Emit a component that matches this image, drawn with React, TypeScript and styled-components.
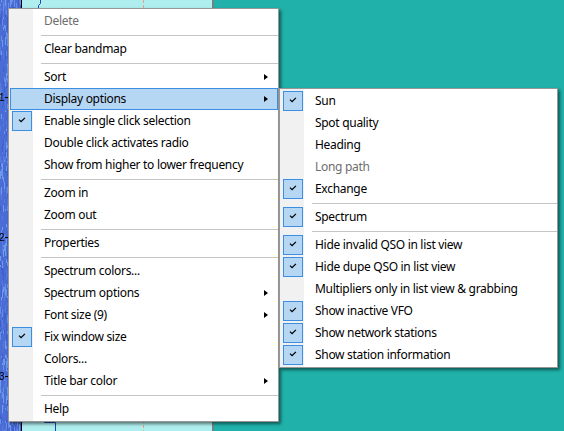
import React from 'react';
import styled, { createGlobalStyle, css } from 'styled-components';

const GlobalStyle = createGlobalStyle`
  html, body {
    margin: 0;
    padding: 0;
  }
  body {
    width: 564px;
    height: 431px;
    overflow: hidden;
    background: #20b2aa;
    font-family: "Noto Sans", "Liberation Sans", sans-serif;
  }
`;

const Desktop = styled.div`
  position: relative;
  width: 564px;
  height: 431px;
  display: flex;
  background: #20b2aa;
  overflow: hidden;
`;

const BandmapWindow = styled.div`
  width: 212px;
  height: 100%;
  display: flex;
  background: #afeeee;
  border-right: 2px solid #6f8585;
`;

const BandmapCanvas = styled.svg`
  display: block;
  width: 212px;
  height: 431px;
`;

const Menu = styled.div<{ $left: number; $top: number; $width: number }>`
  position: absolute;
  left: ${(p) => p.$left}px;
  top: ${(p) => p.$top}px;
  width: ${(p) => p.$width}px;
  box-sizing: border-box;
  display: flex;
  flex-direction: column;
  padding: 1px 0 1px 1px;
  border: 1px solid #979797;
  background: linear-gradient(to right, #f1f1f1 0, #f1f1f1 24px, #ffffff 24px);
  box-shadow: 2px 2px 3px rgba(0, 0, 0, 0.5);
  font-size: 12px;
  letter-spacing: -0.3px;
  color: #000;
`;

const Item = styled.div<{ $active?: boolean; $disabled?: boolean }>`
  height: 22px;
  box-sizing: border-box;
  display: flex;
  align-items: center;
  border: 1px solid transparent;
  color: ${(p) => (p.$disabled ? '#6d6d6d' : '#000')};
  white-space: nowrap;
  ${(p) =>
    p.$active &&
    css`
      background: #b6d7f4;
      border-color: #3b8ee0;
    `}
`;

const Gutter = styled.div`
  width: 33px;
  height: 20px;
  flex: none;
  display: flex;
  align-items: center;
`;

const CheckBox = styled.div`
  width: 20px;
  height: 20px;
  margin-left: 1px;
  box-sizing: border-box;
  background: #b6d7f4;
  border: 1px solid #3b8ee0;
  display: flex;
  align-items: center;
  justify-content: center;
`;

const Label = styled.span`
  flex: 1;
  line-height: 20px;
`;

const Arrow = styled.span`
  width: 0;
  height: 0;
  margin-right: 9px;
  border-left: 4px solid #000;
  border-top: 3.5px solid transparent;
  border-bottom: 3.5px solid transparent;
`;

const Separator = styled.div`
  height: 1px;
  margin: 3px 0 2px 31px;
  background: #c4c4c4;
`;

type Entry =
  | { sep: true }
  | { label: string; checked?: boolean; disabled?: boolean; sub?: boolean; active?: boolean };

const mainItems: Entry[] = [
  { label: 'Delete', disabled: true },
  { sep: true },
  { label: 'Clear bandmap' },
  { sep: true },
  { label: 'Sort', sub: true },
  { label: 'Display options', sub: true, active: true },
  { label: 'Enable single click selection', checked: true },
  { label: 'Double click activates radio' },
  { label: 'Show from higher to lower frequency' },
  { sep: true },
  { label: 'Zoom in' },
  { label: 'Zoom out' },
  { sep: true },
  { label: 'Properties' },
  { sep: true },
  { label: 'Spectrum colors...' },
  { label: 'Spectrum options', sub: true },
  { label: 'Font size (9)', sub: true },
  { label: 'Fix window size', checked: true },
  { label: 'Colors...' },
  { label: 'Title bar color', sub: true },
  { sep: true },
  { label: 'Help' },
];

const displayItems: Entry[] = [
  { label: 'Sun', checked: true },
  { label: 'Spot quality' },
  { label: 'Heading' },
  { label: 'Long path', disabled: true },
  { label: 'Exchange', checked: true },
  { sep: true },
  { label: 'Spectrum', checked: true },
  { sep: true },
  { label: 'Hide invalid QSO in list view', checked: true },
  { label: 'Hide dupe QSO in list view', checked: true },
  { label: 'Multipliers only in list view & grabbing' },
  { label: 'Show inactive VFO', checked: true },
  { label: 'Show network stations', checked: true },
  { label: 'Show station information', checked: true },
];

const Check = () => (
  <svg width="18" height="18" viewBox="0 0 18 18">
    <path d="M6 7.6 L8.1 9.7 L11.9 5.9" fill="none" stroke="#000" strokeWidth="1.3" />
  </svg>
);

const MenuList: React.FC<{ items: Entry[]; left: number; top: number; width: number }> = ({
  items,
  left,
  top,
  width,
}) => (
  <Menu $left={left} $top={top} $width={width}>
    {items.map((it, i) =>
      'sep' in it ? (
        <Separator key={i} />
      ) : (
        <Item key={i} $active={it.active} $disabled={it.disabled}>
          <Gutter>
            {it.checked && (
              <CheckBox>
                <Check />
              </CheckBox>
            )}
          </Gutter>
          <Label>{it.label}</Label>
          {it.sub && <Arrow />}
        </Item>
      )
    )}
  </Menu>
);

// waterfall noise for the left strip of the bandmap
const waterfall = (() => {
  let s = 12345;
  const rnd = () => {
    s = (s * 16807) % 2147483647;
    return s / 2147483647;
  };
  const shades = ['#3f60cc', '#5579dc', '#6690e6', '#6f9aea', '#4a6bd4'];
  const cells: { x: number; y: number; w: number; h: number; c: string }[] = [];
  for (let x = 0; x < 21; x += 1) {
    let y = 0;
    while (y < 431) {
      const h = 2 + Math.floor(rnd() * 7);
      const r = rnd();
      if (r > 0.5) {
        cells.push({ x, y, w: 1, h, c: shades[Math.floor(rnd() * shades.length)] });
      }
      y += h;
    }
  }
  return cells;
})();

const scale = [
  { y: 97, label: '1' },
  { y: 237, label: '2' },
  { y: 376, label: '3' },
];

const Bandmap = () => (
  <BandmapWindow>
    <BandmapCanvas viewBox="0 0 212 431">
      <rect x="0" y="0" width="21" height="431" fill="#4a6cd5" />
      {waterfall.map((c, i) => (
        <rect key={i} x={c.x} y={c.y} width={c.w} height={c.h} fill={c.c} />
      ))}
      <line x1="21.5" y1="0" x2="21.5" y2="431" stroke="#000" />
      {scale.map((t) => (
        <g key={t.label}>
          <line x1="5" y1={t.y + 0.5} x2="8" y2={t.y + 0.5} stroke="#000" />
          <text x="4.5" y={t.y + 4} fontSize="10" textAnchor="end" fontFamily="Liberation Sans, sans-serif" fill="#000">
            {t.label}
          </text>
        </g>
      ))}
      <line x1="143.5" y1="0" x2="143.5" y2="431" stroke="#f0a27c" strokeDasharray="3 2" />
      <polyline points="40.5,0 40.5,3.5 38.5,5.5 38.5,10" fill="none" stroke="#2244b0" />
      <polyline points="44.5,418 44.5,422.5 55.5,422.5 55.5,431" fill="none" stroke="#2244b0" />
    </BandmapCanvas>
  </BandmapWindow>
);

export default function App() {
  return (
    <>
      <GlobalStyle />
      <Desktop>
        <Bandmap />
        <MenuList items={mainItems} left={8} top={8} width={271} />
        <MenuList items={displayItems} left={279} top={88} width={279} />
      </Desktop>
    </>
  );
}
